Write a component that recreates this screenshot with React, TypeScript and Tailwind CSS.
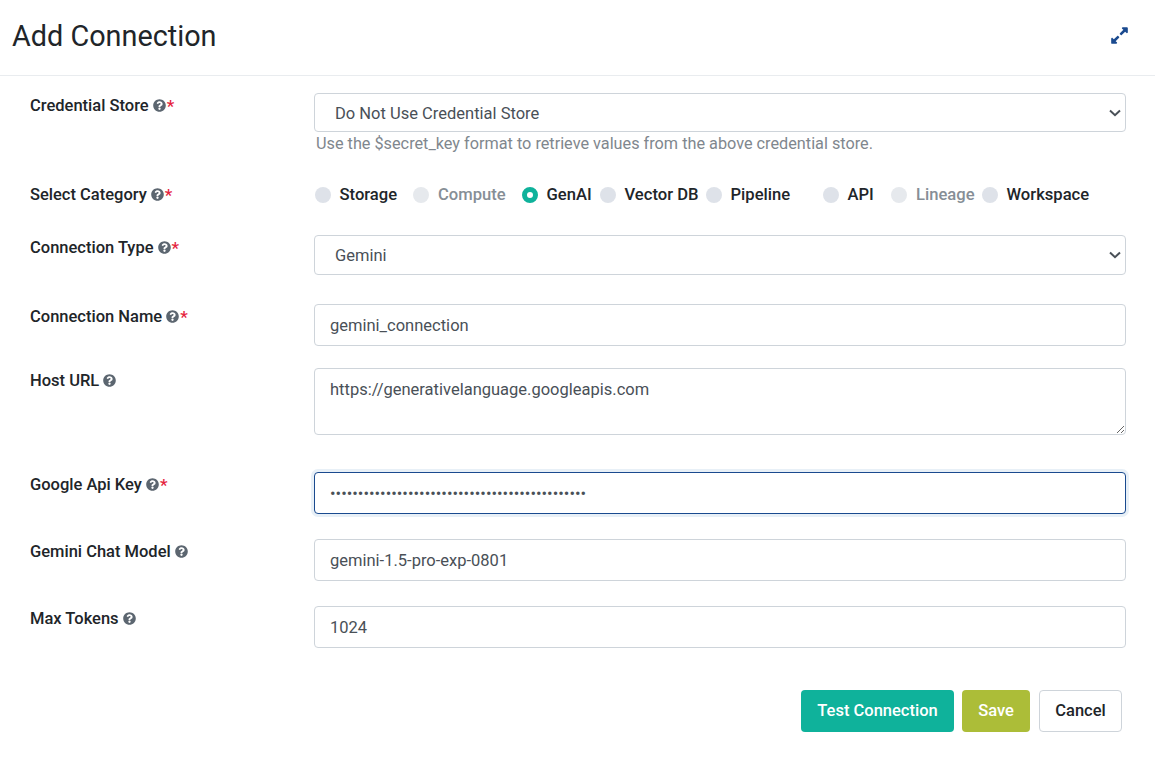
import React from "react";
import { FaQuestionCircle, FaExpandAlt } from "react-icons/fa";

function Label({ text, required, top }: { text: string; required?: boolean; top: string }) {
  return (
    <div className={`w-[314px] shrink-0 self-start pl-[30px] text-[16.5px] leading-[22px] font-medium text-[#212529] flex items-center ${top}`}>
      <span>{text}</span>
      <FaQuestionCircle className="ml-[4px] -mt-[1px] text-[13px] text-[#5c6670]" />
      {required && <span className="text-[#e5233d] ml-[1px] text-[17px]">*</span>}
    </div>
  );
}

function Select({ value, h, pt }: { value: string; h: string; pt: string }) {
  return (
    <div className="relative w-[812px]">
      <select
        defaultValue={value}
        className={`block appearance-none w-full ${h} ${pt} border border-[#ced4da] rounded-[4px] pl-[20px] pr-[28px] text-[16.5px] text-[#495057] bg-white outline-none`}
      >
        <option value={value}>{value}</option>
      </select>
      <svg
        viewBox="0 0 12 8"
        className="absolute right-[5px] top-1/2 -translate-y-1/2 w-[12px] h-[8px] pointer-events-none"
        fill="none"
        stroke="#495057"
        strokeWidth="2"
      >
        <path d="M1 1.5 L6 6.2 L11 1.5" />
      </svg>
    </div>
  );
}

const radios = [
  { t: "Storage", w: "w-[98px]" },
  { t: "Compute", w: "w-[109px]", off: true },
  { t: "GenAI", w: "w-[78px]", on: true },
  { t: "Vector DB", w: "w-[106px]" },
  { t: "Pipeline", w: "w-[117px]" },
  { t: "API", w: "w-[68px]" },
  { t: "Lineage", w: "w-[91px]", off: true },
  { t: "Workspace", w: "w-[110px]" },
];

const inputCls =
  "w-[812px] h-[42px] border border-[#ced4da] rounded-[4px] px-[15px] text-[16.5px] text-[#495057] bg-white outline-none";

export default function App() {
  return (
    <div className="w-[1155px] h-[758px] bg-white overflow-hidden font-['Roboto',sans-serif]">
      <div className="h-[76px] border-b border-[#e9ecef] flex items-center justify-between pl-[12px] pr-[26px] pb-[3px]">
        <h1 className="text-[28.8px] leading-[36px] text-[#212529] font-normal">Add Connection</h1>
        <FaExpandAlt className="text-[19px] text-[#1a4a8f] -mt-[1px]" />
      </div>

      <div className="pt-[17px]">
        <div className="flex">
          <Label text="Credential Store" required top="pt-[2px]" />
          <div>
            <Select value="Do Not Use Credential Store" h="h-[39px]" pt="pt-[4px]" />
            <div className="pl-[2px] mt-[1px] text-[16.25px] leading-[22px] text-[#7f878e]">
              Use the $secret_key format to retrieve values from the above credential store.
            </div>
          </div>
        </div>

        <div className="flex mt-[29px] h-[22px] items-center">
          <Label text="Select Category" required top="" />
          <div className="flex pl-[1px]">
            {radios.map((r) => (
              <div key={r.t} className={`${r.w} flex items-center shrink-0`}>
                {r.on ? (
                  <span className="w-[16px] h-[16px] rounded-full border-[5px] border-[#0fb29b] bg-white shrink-0" />
                ) : (
                  <span className={`w-[16px] h-[16px] rounded-full shrink-0 ${r.off ? "bg-[#e6e9ed]" : "bg-[#dee2e9]"}`} />
                )}
                <span className={`text-[16.6px] leading-[22px] font-medium whitespace-nowrap ${r.off ? "ml-[9px] text-[#868e96]" : "ml-[8.5px] text-[#212529]"}`}>
                  {r.t}
                </span>
              </div>
            ))}
          </div>
        </div>

        <div className="flex mt-[29px]">
          <Label text="Connection Type" required top="pt-[2px]" />
          <Select value="Gemini" h="h-[40px]" pt="pt-[2px]" />
        </div>

        <div className="flex mt-[29px]">
          <Label text="Connection Name" required top="pt-[2px]" />
          <input readOnly value="gemini_connection" className={inputCls} />
        </div>

        <div className="flex mt-[22px]">
          <Label text="Host URL" top="pt-[2px]" />
          <textarea
            readOnly
            value="https://generativelanguage.googleapis.com"
            className="block w-[812px] h-[67px] border border-[#ced4da] rounded-[4px] px-[15px] py-[9px] text-[16.5px] leading-[24px] text-[#495057] bg-white outline-none resize-y"
          />
        </div>

        <div className="flex mt-[37px]">
          <Label text="Google Api Key" required top="pt-[2px]" />
          <input
            readOnly
            type="password"
            value="AIzaSyD4kXm2Qw7Lp9vRt3Hn8Bc6Jf1Gs5Ye0Uo-Zi_xab"
            className="w-[812px] h-[42px] border border-[#1a4a8f] rounded-[4px] px-[15px] text-[16.5px] text-[#495057] bg-white outline-none shadow-[0_0_0_3px_#e8f0f7]"
          />
        </div>

        <div className="flex mt-[25px]">
          <Label text="Gemini Chat Model" top="pt-[2px]" />
          <input readOnly value="gemini-1.5-pro-exp-0801" className={inputCls} />
        </div>

        <div className="flex mt-[25px]">
          <Label text="Max Tokens" top="pt-[2px]" />
          <input readOnly value="1024" className={inputCls} />
        </div>

        <div className="flex justify-end gap-[8px] mt-[42px] pr-[33px] text-[16.5px] font-medium">
          <button className="h-[42px] w-[153px] rounded-[4px] bg-[#0fb29b] text-white">Test Connection</button>
          <button className="h-[42px] w-[68px] rounded-[4px] bg-[#acbd38] text-white">Save</button>
          <button className="h-[42px] w-[83px] rounded-[4px] border border-[#ced4da] bg-white text-[#212529] ml-[1px]">Cancel</button>
        </div>
      </div>
    </div>
  );
}
